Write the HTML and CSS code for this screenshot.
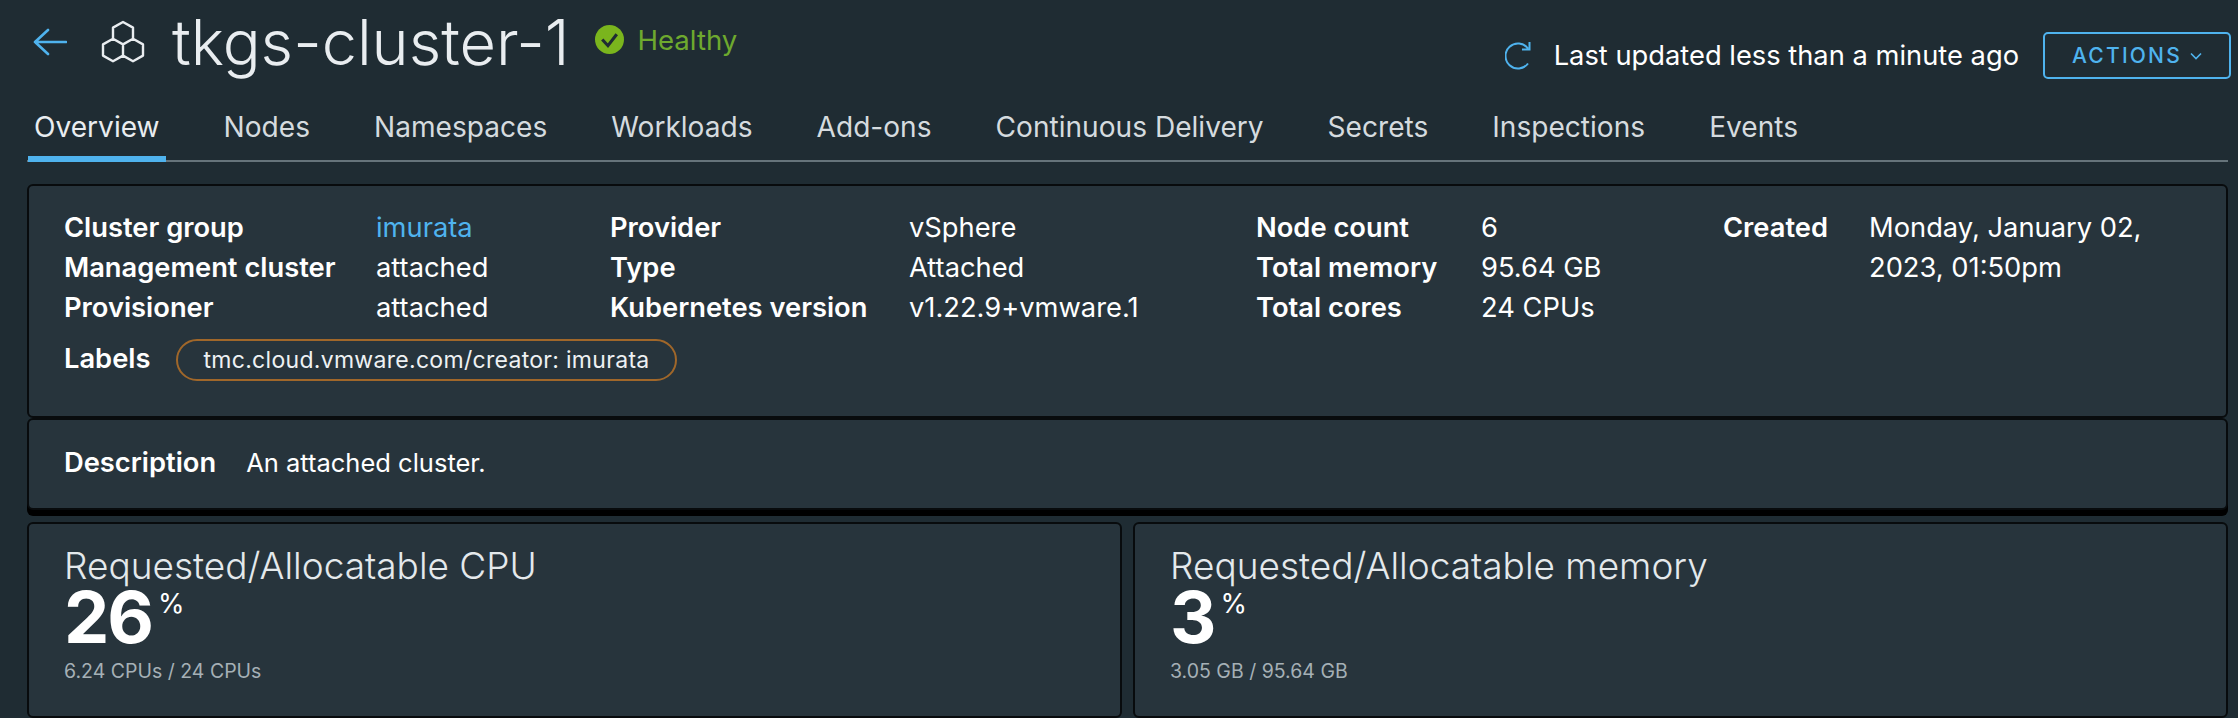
FILE: index.html
```html
<!DOCTYPE html>
<html lang="en">
<head>
    <meta charset="UTF-8">
    <meta name="viewport" content="width=device-width, initial-scale=1.0">
    <title>tkgs-cluster-1</title>
    <link rel="stylesheet" href="styles.css">
</head>
<body>
    <header class="page-header">
        <div class="title-group">
            <a class="back-link" href="#" aria-label="Back">
                <svg width="34" height="28" viewBox="0 0 34 28" fill="none" stroke="#4fb3ee" stroke-width="2.6" stroke-linecap="round" stroke-linejoin="round"><path d="M33 14H2M15 2 2 14l13 12"/></svg>
            </a>
            <svg class="cluster-icon" width="46" height="44" viewBox="0 0 46 44" fill="none" stroke="#e9edf0" stroke-width="2.4" stroke-linejoin="round"><path d="M23 2l10 5.6v11.2L23 24.400l-10-5.600V7.600zM13 18.800l10 5.600v11.200l-10 5.600-10-5.600V24.400zM33 18.800l10 5.600v11.200l-10 5.600-10-5.600"/></svg>
            <h1>tkgs-cluster-1</h1>
            <span class="status">
                <svg width="29" height="29" viewBox="0 0 28 28"><circle cx="14" cy="14" r="14" fill="#7ab51d"/><path d="M7 14l5.500 6L21 9" fill="none" stroke="#1f2c33" stroke-width="3"/></svg>
                Healthy
            </span>
        </div>
        <div class="header-actions">
            <svg class="refresh" width="28" height="30" viewBox="0 0 28 30" fill="none" stroke="#4fb3ee" stroke-width="2"><path d="M23 22.500A12.500 12.500 0 1 1 23 7.500M24.500 1v7.500H17"/></svg>
            <span class="updated">Last updated less than a minute ago</span>
            <button class="actions-btn">ACTIONS
                <svg width="12" height="8" viewBox="0 0 12 8" fill="none" stroke="#4fb3ee" stroke-width="1.600"><path d="M1 1.500l5 5 5-5"/></svg>
            </button>
        </div>
    </header>

    <nav class="tabs">
        <a class="tab active" href="#">Overview</a>
        <a class="tab" href="#">Nodes</a>
        <a class="tab" href="#">Namespaces</a>
        <a class="tab" href="#">Workloads</a>
        <a class="tab" href="#">Add-ons</a>
        <a class="tab" href="#">Continuous Delivery</a>
        <a class="tab" href="#">Secrets</a>
        <a class="tab" href="#">Inspections</a>
        <a class="tab" href="#">Events</a>
    </nav>

    <section class="card summary">
        <div class="facts">
            <div class="fact-col col-a">
                <b>Cluster group</b><a href="#">imurata</a>
                <b>Management cluster</b><span>attached</span>
                <b>Provisioner</b><span>attached</span>
            </div>
            <div class="fact-col col-b">
                <b>Provider</b><span>vSphere</span>
                <b>Type</b><span>Attached</span>
                <b>Kubernetes version</b><span>v1.22.9+vmware.1</span>
            </div>
            <div class="fact-col col-c">
                <b>Node count</b><span>6</span>
                <b>Total memory</b><span>95.64 GB</span>
                <b>Total cores</b><span>24 CPUs</span>
            </div>
            <div class="fact-col col-d">
                <b>Created</b><span>Monday, January 02, 2023, 01:50pm</span>
            </div>
        </div>
        <div class="labels">
            <b>Labels</b>
            <span class="pill">tmc.cloud.vmware.com/creator: imurata</span>
        </div>
    </section>

    <section class="card description">
        <b>Description</b>
        <span>An attached cluster.</span>
    </section>

    <div class="metrics">
        <section class="card metric">
            <h2>Requested/Allocatable CPU</h2>
            <div class="metric-value">26<sup>%</sup></div>
            <p>6.24 CPUs / 24 CPUs</p>
        </section>
        <section class="card metric">
            <h2>Requested/Allocatable memory</h2>
            <div class="metric-value">3<sup>%</sup></div>
            <p>3.05 GB / 95.64 GB</p>
        </section>
    </div>
</body>
</html>
```

FILE: styles.css
```css
body {
    margin: 0;
    height: 718px;
    overflow: hidden;
    padding: 0 10px 0 27px;
    background-color: #1f2c33;
    color: #fff;
    font-family: Inter, "Liberation Sans", sans-serif;
    font-size: 27.3px;
}

.page-header {
    display: flex;
    justify-content: space-between;
    height: 90px;
}

.title-group {
    display: flex;
    align-items: center;
    height: 83px;
    padding-left: 6px;
}

.back-link {
    display: flex;
    margin-right: 33px;
}

.cluster-icon {
    margin-right: 26px;
}

h1 {
    margin: 1px 26px 0 0;
    font-size: 63px;
    font-weight: 300;
    color: #e9edf0;
}

.status {
    display: flex;
    align-items: center;
    gap: 13px;
    color: #6ea92e;
    font-size: 27.6px;
    margin-top: -4px;
}

.header-actions {
    display: flex;
    align-items: center;
    height: 47px;
    margin-top: 32px;
    margin-right: -3px;
}

.refresh {
    margin-right: 21px;
}

.updated {
    margin-right: 24px;
}

.actions-btn {
    display: flex;
    align-items: center;
    justify-content: center;
    gap: 8px;
    width: 188px;
    height: 47px;
    border: 2px solid #4fb3ee;
    border-radius: 5px;
    background: none;
    color: #4fb3ee;
    font-family: inherit;
    font-size: 21px;
    font-weight: 500;
    letter-spacing: 2.2px;
}

.tabs {
    display: flex;
    height: 72px;
    box-sizing: border-box;
    border-bottom: 2px solid #66747b;
    padding-left: 1px;
}

.tab {
    display: flex;
    align-items: center;
    padding: 2px 6px 0;
    margin: 0 52px -2px 0;
    font-size: 28.1px;
    color: #d5dbdf;
    text-decoration: none;
}

.tab.active {
    color: #e9edf0;
    box-shadow: inset 0 -6px 0 #4fb3ee;
}

.card {
    box-sizing: border-box;
    border: 2px solid #080b0d;
    border-radius: 6px;
    background-color: #27343c;
}

.summary {
    height: 234px;
    margin-top: 22px;
    padding: 22px 36px 0 35px;
}

.facts {
    display: flex;
    line-height: 40px;
}

.fact-col {
    display: grid;
    align-content: start;
}

.fact-col b, .labels b, .description b {
    font-weight: 600;
}

.fact-col a {
    color: #4fb3ee;
    text-decoration: none;
}

.col-a {
    grid-template-columns: 312px 234px;
}

.col-b {
    grid-template-columns: 299px 347px;
}

.col-c {
    grid-template-columns: 225px 242px;
}

.col-d {
    grid-template-columns: 146px 330px;
}

.labels {
    display: flex;
    align-items: center;
    gap: 26px;
    margin-top: 11px;
}

.labels b {
    margin-top: -3px;
}

.pill {
    display: flex;
    align-items: center;
    height: 42px;
    box-sizing: border-box;
    padding: 0 25px;
    border: 2px solid #a0672a;
    border-radius: 21px;
    font-size: 23px;
    letter-spacing: .3px;
    color: #eef1f3;
}

.description {
    display: flex;
    align-items: center;
    gap: 30px;
    height: 92px;
    padding: 0 36px 4px 35px;
    box-shadow: 0 6px 0 #000;
}

.description span {
    font-size: 25.5px;
}

.metrics {
    display: flex;
    gap: 11px;
    margin-top: 12px;
}

.metric {
    flex: 1;
    height: 196px;
    padding: 21px 36px 0 35px;
}

.metric h2 {
    margin: 0;
    font-size: 37px;
    font-weight: 300;
    line-height: 42px;
    color: #e4e9ec;
}

.metric-value {
    display: flex;
    align-items: flex-start;
    font-size: 72px;
    font-weight: 700;
    line-height: 60px;
    letter-spacing: -2px;
}

.metric-value sup {
    margin: 0 0 0 6px;
    font-size: 27px;
    font-weight: 400;
    line-height: 34px;
    letter-spacing: 0;
}

.metric p {
    margin: 12px 0 0;
    font-size: 19.5px;
    color: #a5b0b6;
}
```
